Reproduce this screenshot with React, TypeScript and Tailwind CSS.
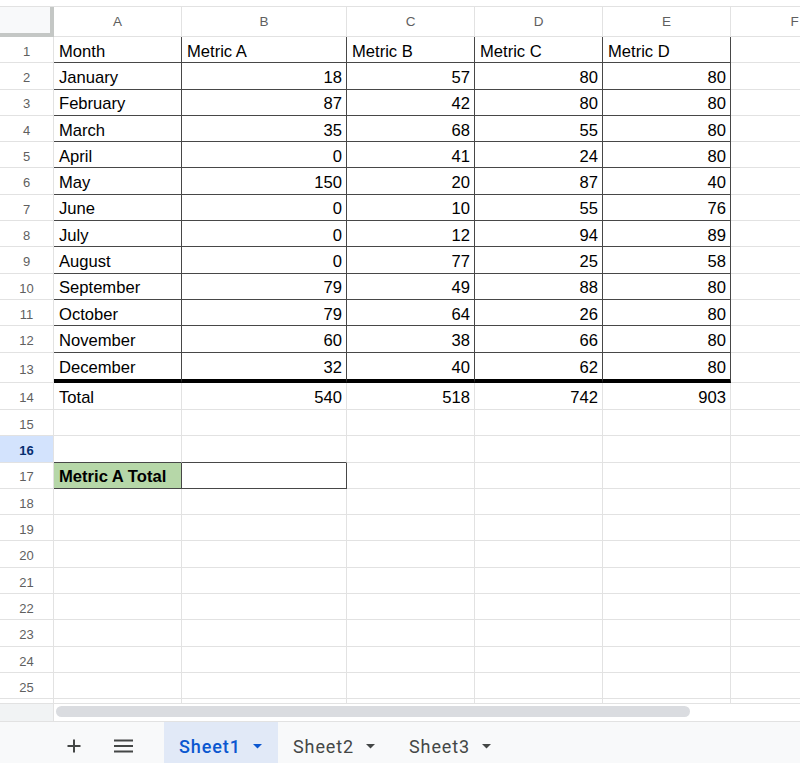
const COLS = ["A", "B", "C", "D", "E", "F"];

const DATA: (string | number)[][] = [
  ["Month", "Metric A", "Metric B", "Metric C", "Metric D"],
  ["January", 18, 57, 80, 80],
  ["February", 87, 42, 80, 80],
  ["March", 35, 68, 55, 80],
  ["April", 0, 41, 24, 80],
  ["May", 150, 20, 87, 40],
  ["June", 0, 10, 55, 76],
  ["July", 0, 12, 94, 89],
  ["August", 0, 77, 25, 58],
  ["September", 79, 49, 88, 80],
  ["October", 79, 64, 26, 80],
  ["November", 60, 38, 66, 80],
  ["December", 32, 40, 62, 80],
  ["Total", 540, 518, 742, 903],
];

const GRID = "grid grid-cols-[54px_128px_165px_128px_128px_128px_128px]";

function rowHeight(r: number) {
  if (r === 13) return "h-[30.4px]";
  if (r === 14) return "h-[27px]";
  return "h-[26.3px]";
}

// border classes for a data cell (c: 0 = A ... 5 = F)
function cellBorders(r: number, c: number) {
  const inTable = r <= 13 && c <= 4;
  let b = "border-r border-b border-[#e2e2e2]";
  if (inTable) {
    b = r === 13 ? "border-r border-r-[#474747] border-b-4 border-b-black" : "border-r border-b border-[#474747]";
  }
  if (r === 16 && (c === 0 || c === 1)) b = "border-r border-r-[#e2e2e2] border-b border-b-[#474747]";
  if (r === 17 && (c === 0 || c === 1)) b = "border-r border-b border-[#474747]";
  return b;
}

function Cell({ r, c }: { r: number; c: number }) {
  const v = DATA[r - 1]?.[c];
  const num = typeof v === "number";
  const green = r === 17 && c === 0;
  return (
    <div
      className={`${cellBorders(r, c)} flex items-center overflow-hidden whitespace-nowrap pt-[5px] px-[4px] ${num ? "justify-end" : "justify-start pl-[5px]"} ${green ? "bg-[#b6d7a8] font-bold" : "bg-white"}`}
    >
      {green ? "Metric A Total" : v}
    </div>
  );
}

function Caret({ color }: { color: string }) {
  return (
    <svg width="9" height="5" viewBox="0 0 9 5" className="shrink-0">
      <path d="M0 0h9L4.5 4.5z" fill={color} />
    </svg>
  );
}

export default function App() {
  const rows = Array.from({ length: 25 }, (_, i) => i + 1);
  return (
    <div className="w-[800px] h-[763px] overflow-hidden bg-white flex flex-col font-['Liberation_Sans',Arial,sans-serif] text-[16.6px] text-black">
      <div className="h-[7px] shrink-0 border-b border-[#e2e2e2]" />

      <div className="w-[859px] shrink-0">
        <div className={`${GRID} h-[30px]`}>
          <div className="bg-[#f8f9fa] border-r-4 border-b-4 border-[#c4c7c5]" />
          {COLS.map((l) => (
            <div
              key={l}
              className="border-r border-b border-[#e2e2e2] flex items-center justify-center pt-[2px] text-[13.5px] text-[#5f5f5f]"
            >
              {l}
            </div>
          ))}
        </div>

        {rows.map((r) => (
          <div key={r} className={`${GRID} ${rowHeight(r)}`}>
            <div
              className={`border-r border-b border-[#e2e2e2] flex items-center justify-center pt-[4px] text-[13px] ${
                r === 16 ? "bg-[#d3e3fd] font-bold text-[#062e6f]" : "text-[#5f5f5f]"
              }`}
            >
              {r}
            </div>
            {COLS.map((_, c) => (
              <Cell key={c} r={r} c={c} />
            ))}
          </div>
        ))}

        <div className={`${GRID} h-[5px]`}>
          {Array.from({ length: 7 }, (_, i) => (
            <div key={i} className="border-r border-b border-[#e2e2e2]" />
          ))}
        </div>
      </div>

      <div className="h-[17px] shrink-0 flex">
        <div className="w-[54px] bg-[#f1f3f4] border-r border-[#e2e2e2]" />
        <div className="flex-1 pl-[2px] pt-[2px]">
          <div className="w-[634px] h-[11px] rounded-full bg-[#dadce0]" />
        </div>
      </div>

      <div className="flex-1 flex items-stretch bg-[#f8f9fa] border-t border-[#e2e2e2] font-['Roboto',sans-serif]">
        <div className="w-[164px] flex items-center pt-[7px]">
          <svg width="14" height="14" viewBox="0 0 14 14" className="ml-[67px]">
            <path d="M7 0.5v13M0.5 7h13" stroke="#444746" strokeWidth="2" />
          </svg>
          <svg width="19" height="14" viewBox="0 0 19 14" className="ml-[33px]">
            <path d="M0 1.5h19M0 7h19M0 12.5h19" stroke="#444746" strokeWidth="2" />
          </svg>
        </div>
        <div className="w-[114px] flex items-center gap-[12px] pt-[7px] pl-[15px] bg-[#e1e9f7] text-[#0b57d0] font-medium text-[18px] tracking-[0.9px]">
          <span>Sheet1</span>
          <Caret color="#0b57d0" />
        </div>
        {["Sheet2", "Sheet3"].map((s) => (
          <div key={s} className="w-[116px] flex items-center gap-[12px] pt-[7px] pl-[15px] text-[#444746] text-[18px] tracking-[0.9px]">
            <span>{s}</span>
            <Caret color="#444746" />
          </div>
        ))}
      </div>
    </div>
  );
}
